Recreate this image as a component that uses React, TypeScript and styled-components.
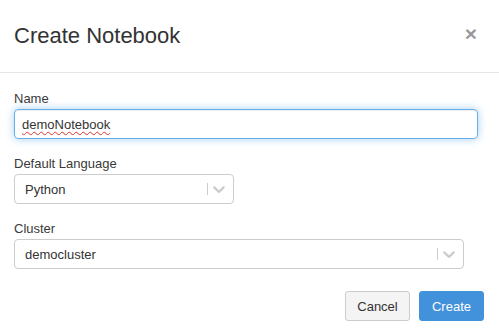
import styled, { createGlobalStyle } from "styled-components";

const GlobalStyle = createGlobalStyle`
  html, body {
    margin: 0;
    padding: 0;
    background: #ffffff;
  }
  body {
    font-family: "Liberation Sans", Arial, sans-serif;
    color: #333333;
  }
  * {
    box-sizing: border-box;
  }
`;

const Modal = styled.div`
  width: 499px;
  height: 335px;
  background: #ffffff;
  display: flex;
  flex-direction: column;
`;

const Header = styled.div`
  height: 73px;
  display: flex;
  align-items: center;
  justify-content: space-between;
  padding: 0 22px 0 14px;
  border-bottom: 1px solid #e5e5e5;
`;

const Title = styled.h4`
  margin: 0;
  font-size: 22px;
  font-weight: normal;
  line-height: normal;
  color: #333333;
`;

const Close = styled.button`
  border: 0;
  background: transparent;
  padding: 0;
  margin-bottom: 5px;
  font-family: "Liberation Sans", Arial, sans-serif;
  font-size: 21px;
  font-weight: bold;
  line-height: 1;
  color: #000000;
  opacity: 0.4;
  cursor: pointer;
`;

const Body = styled.div`
  padding: 18px 14px 0;
`;

const Group = styled.div`
  display: flex;
  flex-direction: column;
  align-items: flex-start;
  & + & {
    margin-top: 17px;
  }
`;

const Label = styled.label`
  font-size: 13px;
  line-height: 15px;
  margin-bottom: 3px;
  color: #3a3a3a;
`;

const TextField = styled.div<{ $width: number }>`
  width: ${(p) => p.$width}px;
  height: 30px;
  display: flex;
  align-items: center;
  padding: 0 7px;
  font-size: 13px;
  color: #333333;
  border: 1px solid #66afe9;
  border-radius: 4px;
  box-shadow: inset 0 1px 1px rgba(0, 0, 0, 0.075),
    0 0 8px rgba(102, 175, 233, 0.6);
`;

const Misspelled = styled.span`
  text-decoration: underline wavy #e0312b;
  text-decoration-thickness: 1px;
  text-underline-offset: 2px;
`;

const Select = styled.div<{ $width: number }>`
  width: ${(p) => p.$width}px;
  height: 30px;
  display: flex;
  align-items: center;
  border: 1px solid #cccccc;
  border-radius: 4px;
  background: #ffffff;
`;

const SelectValue = styled.div`
  flex: 1;
  padding-left: 10px;
  font-size: 13px;
  color: #333333;
`;

const Separator = styled.span`
  width: 1px;
  height: 12px;
  background: #cccccc;
`;

const Indicator = styled.span`
  display: flex;
  align-items: center;
  padding: 0 4px 0 1px;
  svg {
    fill: #cccccc;
  }
`;

const Footer = styled.div`
  display: flex;
  justify-content: flex-end;
  gap: 9px;
  padding: 22px 15px 0;
`;

const Button = styled.button<{ $primary?: boolean }>`
  height: 30px;
  width: 65px;
  font-family: "Liberation Sans", Arial, sans-serif;
  font-size: 13px;
  border-radius: 3px;
  border: 1px solid ${(p) => (p.$primary ? "#4291db" : "#cccccc")};
  background: ${(p) => (p.$primary ? "#4291db" : "#f4f4f4")};
  color: ${(p) => (p.$primary ? "#ffffff" : "#333333")};
  cursor: pointer;
`;

function Chevron() {
  return (
    <svg width="20" height="20" viewBox="0 0 20 20" aria-hidden="true">
      <path d="M4.516 7.548c0.436-0.446 1.043-0.481 1.576 0l3.908 3.747 3.908-3.747c0.533-0.481 1.141-0.446 1.574 0 0.436 0.445 0.408 1.197 0 1.615-0.406 0.418-4.695 4.502-4.695 4.502-0.217 0.223-0.502 0.335-0.787 0.335s-0.57-0.112-0.789-0.335c0 0-4.287-4.084-4.695-4.502s-0.436-1.17 0-1.615z" />
    </svg>
  );
}

function Dropdown({ value, width }: { value: string; width: number }) {
  return (
    <Select $width={width}>
      <SelectValue>{value}</SelectValue>
      <Separator />
      <Indicator>
        <Chevron />
      </Indicator>
    </Select>
  );
}

export default function App() {
  return (
    <>
      <GlobalStyle />
      <Modal>
        <Header>
          <Title>Create Notebook</Title>
          <Close aria-label="Close">×</Close>
        </Header>
        <Body>
          <Group>
            <Label>Name</Label>
            <TextField $width={464}>
              <Misspelled>demoNotebook</Misspelled>
            </TextField>
          </Group>
          <Group>
            <Label>Default Language</Label>
            <Dropdown value="Python" width={220} />
          </Group>
          <Group>
            <Label>Cluster</Label>
            <Dropdown value="democluster" width={450} />
          </Group>
        </Body>
        <Footer>
          <Button>Cancel</Button>
          <Button $primary>Create</Button>
        </Footer>
      </Modal>
    </>
  );
}
